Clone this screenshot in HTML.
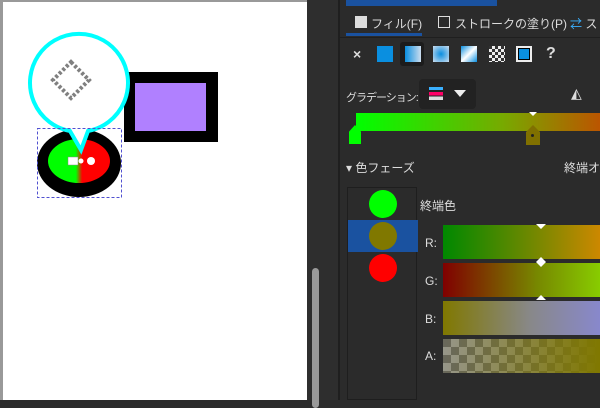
<!DOCTYPE html><html><head><style>
body{margin:0;width:600px;height:400px;overflow:hidden;background:#2b2b2b;font-family:"Liberation Sans","Noto Sans CJK JP",sans-serif;color:#ddd;position:relative}
.a{position:absolute}
.t{font-size:12px;white-space:nowrap}
</style></head><body>
<div class="a" style="left:0;top:0;width:307px;height:400px;background:#fff;border-top:2px solid #999;border-left:3px solid #999;box-sizing:border-box"></div>
<div class="a" style="left:307px;top:0;width:33px;height:400px;background:#2e2e2e"></div>
<div class="a" style="left:312px;top:268px;width:7px;height:140px;background:#9a9a9a;border-radius:4px"></div>
<div class="a" style="left:338px;top:0;width:2px;height:400px;background:#1f1f1f"></div>
<svg class="a" style="left:0;top:0" width="307" height="400">
<defs><linearGradient id="g1" x1="0" x2="1"><stop offset="0.45" stop-color="#0f0"/><stop offset="0.55" stop-color="#f00"/></linearGradient></defs>
<rect x="124" y="72" width="94" height="70" fill="#000"/>
<rect x="135" y="83" width="71" height="48" fill="#b080ff"/>
<ellipse cx="79" cy="163" rx="42" ry="34" fill="#000"/>
<ellipse cx="79" cy="161" rx="31" ry="22" fill="url(#g1)"/>
<path d="M70,131 A49,49 0 1 1 88,131 L81,150 Z" fill="#fff" stroke="#0ff" stroke-width="4"/>
<path d="M71,62 L89,80 L71,98 L53,80 Z" fill="none" stroke="#808080" stroke-width="4" stroke-dasharray="3 2"/>
<rect x="37.5" y="128.5" width="84" height="69" fill="none" stroke="#5050d0" stroke-dasharray="3 2"/>
<rect x="68" y="157" width="10" height="8" fill="#fff" stroke="#888" stroke-width=".5"/>
<circle cx="91" cy="161" r="4" fill="#fff"/><circle cx="81" cy="161" r="2.5" fill="#fff"/>
</svg>
<div class="a" style="left:346px;top:0;width:151px;height:6px;background:#1a52a0"></div>
<div class="a" style="left:340px;top:37px;width:260px;height:1px;background:#1f1f1f"></div>
<div class="a" style="left:355px;top:16px;width:12px;height:12px;background:#ddd"></div>
<div class="a t" style="left:371px;top:15px">フィル(F)</div>
<div class="a" style="left:438px;top:16px;width:10px;height:10px;border:1px solid #ddd"></div>
<div class="a t" style="left:455px;top:15px">ストロークの塗り(P)</div>
<div class="a t" style="left:570px;top:15px;color:#3ab0ff">⇄ <span style="color:#ddd">ス</span></div>
<div class="a" style="left:346px;top:33px;width:76px;height:3px;background:#1a52a0"></div>
<div class="a t" style="left:353px;top:46px;font-size:14px;font-weight:bold">×</div>
<div class="a" style="left:377px;top:46px;width:16px;height:16px;background:#0a8fe0"></div>
<div class="a" style="left:400px;top:42px;width:24px;height:24px;background:#1c1c1c;border-radius:3px"></div>
<div class="a" style="left:405px;top:46px;width:16px;height:16px;background:linear-gradient(90deg,#0a8fe0,#cde)"></div>
<div class="a" style="left:433px;top:46px;width:16px;height:16px;background:radial-gradient(#0a8fe0,#cde)"></div>
<div class="a" style="left:461px;top:46px;width:16px;height:16px;background:linear-gradient(135deg,#0a8fe0,#fff,#0a8fe0)"></div>
<div class="a" style="left:489px;top:46px;width:16px;height:16px;background:repeating-conic-gradient(#eee 0 25%,#333 0 50%) 0 0/6px 6px"></div>
<div class="a" style="left:516px;top:46px;width:12px;height:12px;border:2px solid #eee;background:#0a8fe0;box-shadow:inset 0 0 0 1px #000"></div>
<div class="a t" style="left:546px;top:45px;font-size:16px;font-weight:bold">?</div>
<div class="a t" style="left:346px;top:89px;font-size:11px;letter-spacing:-1px">グラデーション:</div>
<div class="a" style="left:419px;top:79px;width:57px;height:30px;background:#222;border-radius:4px"></div>
<div class="a" style="left:429px;top:87px;width:14px;height:13px;background:linear-gradient(#3ab0ff 0 25%,#222 25% 40%,#f06 40% 65%,#222 65% 75%,#ddd 75%)"></div>
<div class="a" style="left:454px;top:90px;width:0;height:0;border:6px solid transparent;border-top:7px solid #eee"></div>
<div class="a t" style="left:571px;top:85px;font-size:14px">◭</div>
<div class="a" style="left:356px;top:113px;width:244px;height:18px;background:linear-gradient(90deg,#0f0,#7a0 60%,#b50)"></div>
<div class="a" style="left:529px;top:112px;width:0;height:0;border:4px solid transparent;border-top:4px solid #fff"></div>
<div class="a" style="left:349px;top:125px;width:12px;height:19px;background:#0f0;clip-path:polygon(50% 0,100% 35%,100% 100%,0 100%,0 35%)"></div>
<div class="a" style="left:526px;top:125px;width:14px;height:20px;background:#807000;clip-path:polygon(50% 0,100% 35%,100% 100%,0 100%,0 35%)"></div>
<div class="a" style="left:531px;top:134px;width:3px;height:3px;background:#222;border-radius:50%"></div>
<div class="a t" style="left:346px;top:159px">▾ 色フェーズ</div>
<div class="a t" style="left:564px;top:159px">終端オ</div>
<div class="a" style="left:347px;top:187px;width:70px;height:213px;border:1px solid #1e1e1e;box-sizing:border-box"></div>
<div class="a" style="left:369px;top:190px;width:28px;height:28px;border-radius:50%;background:#0f0"></div>
<div class="a" style="left:348px;top:220px;width:70px;height:32px;background:#1a52a0"></div>
<div class="a" style="left:369px;top:222px;width:28px;height:28px;border-radius:50%;background:#807800"></div>
<div class="a" style="left:369px;top:254px;width:28px;height:28px;border-radius:50%;background:#f00"></div>
<div class="a t" style="left:420px;top:197px">終端色</div>
<div class="a t" style="left:425px;top:236px">R:</div>
<div class="a t" style="left:425px;top:274px">G:</div>
<div class="a t" style="left:425px;top:312px">B:</div>
<div class="a t" style="left:425px;top:349px">A:</div>
<div class="a" style="left:443px;top:225px;width:157px;height:34px;background:linear-gradient(90deg,#080,#780 60%,#c80)"></div>
<div class="a" style="left:443px;top:263px;width:157px;height:34px;background:linear-gradient(90deg,#800000,#780 60%,#8c0)"></div>
<div class="a" style="left:443px;top:301px;width:157px;height:34px;background:linear-gradient(90deg,#807800,#888 55%,#88c)"></div>
<div class="a" style="left:443px;top:339px;width:157px;height:34px;background:linear-gradient(90deg,rgba(128,120,0,.1),rgba(128,120,0,1)),repeating-conic-gradient(#999 0 25%,#666 0 50%) 0 0/16px 16px"></div>
<div class="a" style="left:536px;top:224px;width:0;height:0;border:5px solid transparent;border-top:5px solid #fff"></div>
<div class="a" style="left:536px;top:252px;width:0;height:0;border:5px solid transparent;border-bottom:5px solid #fff"></div>
<div class="a" style="left:536px;top:262px;width:0;height:0;border:5px solid transparent;border-top:5px solid #fff"></div>
<div class="a" style="left:536px;top:290px;width:0;height:0;border:5px solid transparent;border-bottom:5px solid #fff"></div>
</body></html>
